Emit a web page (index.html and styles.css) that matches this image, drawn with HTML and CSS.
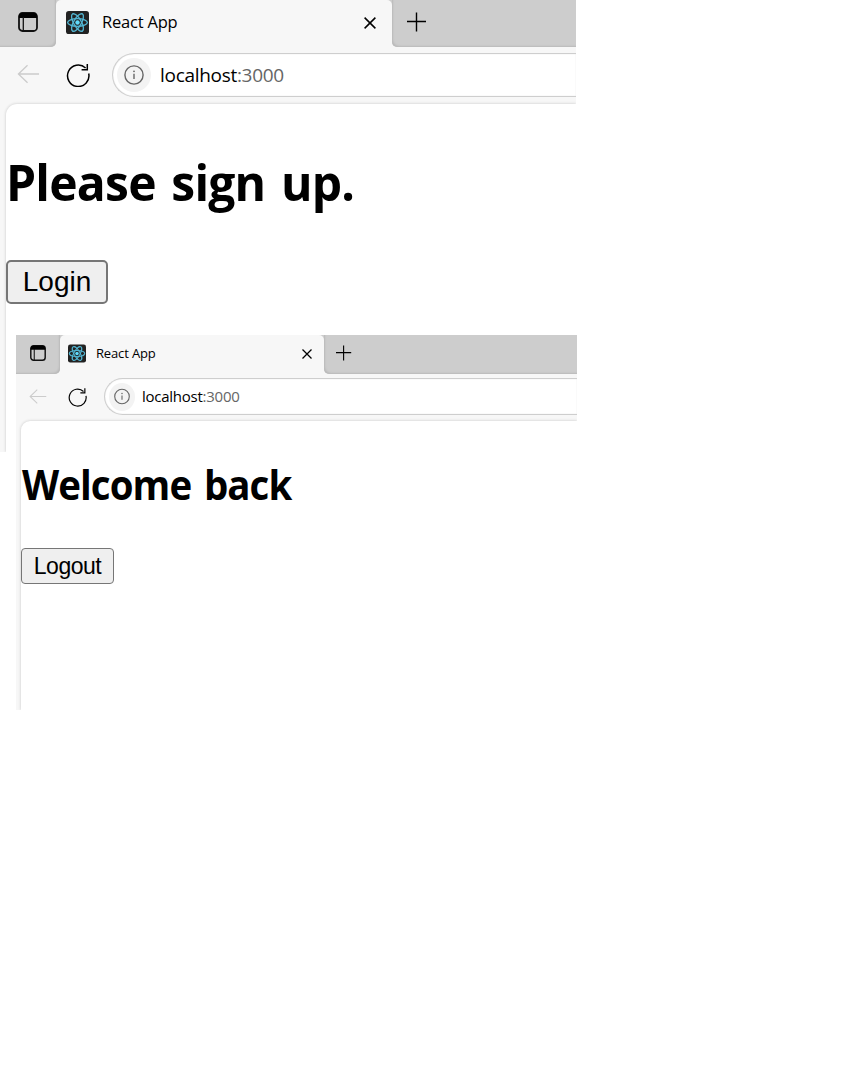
FILE: index.html
```html
<!DOCTYPE html>
<html lang="en">
<head>
<meta charset="utf-8">
<title>React App</title>
<link rel="stylesheet" href="styles.css">
</head>
<body>
<svg class="defs" aria-hidden="true">
  <symbol id="tabs" viewBox="0 0 20 20"><rect x="1" y="1" width="18" height="18" rx="3.5" fill="none" stroke="#111" stroke-width="1.8"/><path d="M1 6V4a3 3 0 0 1 3-3h12a3 3 0 0 1 3 3v2z" fill="#000"/><path d="M5.3 5v14" stroke="#111" stroke-width="1.3"/></symbol>
  <symbol id="react" viewBox="0 0 24 24"><rect width="24" height="24" rx="3" fill="#222"/><g fill="none" stroke="#52b5d2" stroke-width="1.4"><ellipse cx="12" cy="12" rx="10.3" ry="4"/><ellipse cx="12" cy="12" rx="10.3" ry="4" transform="rotate(60 12 12)"/><ellipse cx="12" cy="12" rx="10.3" ry="4" transform="rotate(120 12 12)"/></g><circle cx="12" cy="12" r="2.3" fill="#61dafb"/></symbol>
  <symbol id="close" viewBox="0 0 12 12"><path d="M.6.6l10.8 10.8M11.4.6L.6 11.4" stroke="#000" stroke-width="1.5"/></symbol>
  <symbol id="plus" viewBox="0 0 20 20"><path d="M9.5 .5v19M0 9.5h19" stroke="#000" stroke-width="1.4"/></symbol>
  <symbol id="back" viewBox="0 0 24 20"><path d="M23 10H1.5M11 .8L1.5 10l9.5 9.2" fill="none" stroke="#ccc" stroke-width="1.4"/></symbol>
  <symbol id="reload" viewBox="0 0 24 24"><path d="M22.7 10.5A10.7 10.7 0 1 1 19.6 5M21.3 1v5.7h-5.7" fill="none" stroke="#000" stroke-width="1.5"/></symbol>
  <symbol id="info" viewBox="0 0 20 20"><circle cx="10" cy="10" r="9.1" fill="none" stroke="#666" stroke-width="1.4"/><path d="M10 8.8v5.3" stroke="#666" stroke-width="1.4"/><circle cx="10" cy="6.3" r=".9" fill="#666"/></symbol>
</svg>

<main class="stage">
  <section class="window">
    <header class="strip">
      <div class="workspace"><svg class="i-tabs"><use href="#tabs"/></svg></div>
      <div class="tab">
        <svg class="i-react"><use href="#react"/></svg>
        <span class="tab-title">React App</span>
        <svg class="i-close"><use href="#close"/></svg>
      </div>
      <div class="strip-rest"><svg class="i-plus"><use href="#plus"/></svg></div>
    </header>
    <nav class="toolbar">
      <svg class="i-back"><use href="#back"/></svg>
      <svg class="i-reload"><use href="#reload"/></svg>
      <div class="address">
        <span class="badge"><svg class="i-info"><use href="#info"/></svg></span>
        <span class="url">localhost<span class="port">:3000</span></span>
      </div>
    </nav>
    <div class="page">
      <h1 class="heading">Please sign up.</h1>
      <button class="action">Login</button>
    </div>
  </section>

  <section class="window small">
    <header class="strip">
      <div class="workspace"><svg class="i-tabs"><use href="#tabs"/></svg></div>
      <div class="tab">
        <svg class="i-react"><use href="#react"/></svg>
        <span class="tab-title">React App</span>
        <svg class="i-close"><use href="#close"/></svg>
      </div>
      <div class="strip-rest"><svg class="i-plus"><use href="#plus"/></svg></div>
    </header>
    <nav class="toolbar">
      <svg class="i-back"><use href="#back"/></svg>
      <svg class="i-reload"><use href="#reload"/></svg>
      <div class="address">
        <span class="badge"><svg class="i-info"><use href="#info"/></svg></span>
        <span class="url">localhost<span class="port">:3000</span></span>
      </div>
    </nav>
    <div class="page">
      <h1 class="heading">Welcome back</h1>
      <button class="action">Logout</button>
    </div>
  </section>
</main>
</body>
</html>
```
FILE: styles.css
```css
* { box-sizing: border-box; }
body { margin: 0; background: #fff; color: #000; font-family: "Open Sans", "Noto Sans", sans-serif; }
svg { display: block; flex: none; }
.defs { display: none; }
.stage { position: relative; height: 1066px; overflow: hidden; }

.window { display: flex; flex-direction: column; width: 576px; height: 452px; background: #f7f7f7; overflow: hidden; }

.strip { display: flex; flex: none; height: 47px; background: linear-gradient(#cdcdcd 50%, #f7f7f7 50%); }
.workspace, .strip-rest { display: flex; background: #cdcdcd; }
.workspace { width: 56px; padding: 12px 0 0 18px; border-bottom-right-radius: 5px; box-shadow: inset -2px -2px 2px -1px #b9b9b9; }
.strip-rest { flex: 1; padding: 12px 0 0 15px; border-bottom-left-radius: 5px; box-shadow: inset 2px -2px 2px -1px #b9b9b9; }
.tab { display: flex; width: 336px; padding: 11px 0 0 10px; background: #f7f7f7; border-radius: 5px 5px 0 0; }
.tab-title { width: 262px; margin-left: 13px; font-size: 16.5px; line-height: 22px; white-space: nowrap; letter-spacing: -0.2px; }
.i-tabs { width: 20px; height: 20px; }
.i-react { width: 23px; height: 23px; }
.i-close { width: 12px; height: 12px; margin-top: 6px; }
.i-plus { width: 20px; height: 20px; }

.toolbar { display: flex; flex: none; height: 57px; padding-left: 17px; }
.i-back { width: 23px; height: 20px; margin-top: 17px; }
.i-reload { width: 24px; height: 24px; margin: 16px 0 0 26px; }
.address { display: flex; align-items: center; flex: 1; height: 44px; margin: 6px 0 0 22px; padding-left: 4px; background: #fff; border: 1px solid #cecece; border-right: 0; border-radius: 22px 0 0 22px; box-shadow: inset 0 0 1px #cecece; }
.badge { display: flex; align-items: center; justify-content: center; width: 34px; height: 34px; background: #f3f3f3; border-radius: 50%; }
.i-info { width: 20px; height: 20px; }
.url { margin-left: 9px; font-size: 19px; white-space: nowrap; letter-spacing: -0.3px; }
.port { color: #666; }

.page { flex: 1; margin-left: 6px; background: #fff; border-top-left-radius: 11px; box-shadow: 0 0 3px 0 #c4c4c4; }
.heading { height: 64px; margin: 46px 0 0 0; font-size: 50px; line-height: 64px; font-weight: 700; white-space: nowrap; letter-spacing: -0.8px; word-spacing: 4px; transform: scaleX(0.96); transform-origin: 0 0; }
.action { display: block; width: 102px; height: 44px; margin-top: 46px; padding: 0; background: #efefef; border: 2px solid #767676; border-radius: 5px; color: #000; font: 28px/38px "Liberation Sans", Arial, sans-serif; white-space: nowrap; }

.small { position: absolute; left: 16px; top: 335px; width: 561px; height: 375px; }
.small .strip { height: 39px; }
.small .workspace { width: 44px; padding: 10px 0 0 14px; }
.small .tab { width: 264px; padding: 9px 0 0 8px; }
.small .strip-rest { padding: 10px 0 0 12px; }
.small .tab-title { width: 206px; margin-left: 10px; font-size: 13px; line-height: 19px; letter-spacing: -0.15px; }
.small .i-tabs { width: 16px; height: 16px; }
.small .i-react { width: 18px; height: 19px; }
.small .i-close { width: 10px; height: 10px; margin-top: 5px; }
.small .i-plus { width: 16px; height: 16px; }
.small .toolbar { height: 47px; padding-left: 13px; }
.small .i-back { width: 18px; height: 17px; margin-top: 14px; }
.small .i-reload { width: 19px; height: 20px; margin: 13px 0 0 21px; }
.small .address { height: 37px; margin: 4px 0 0 17px; }
.small .badge { width: 26px; height: 28px; }
.small .i-info { width: 16px; height: 17px; }
.small .url { margin: -2px 0 0 7px; font-size: 15px; letter-spacing: -0.25px; }
.small .page { margin-left: 5px; border-top-left-radius: 9px; }
.small .heading { height: 52px; margin-top: 37px; font-size: 42px; line-height: 52px; letter-spacing: -1px; transform: translateX(1px) scaleX(0.915); }
.small .action { width: 93px; height: 36px; margin-top: 38px; font-size: 23px; line-height: 31px; letter-spacing: -0.5px; border-width: 1.5px; border-radius: 4px; }
```
